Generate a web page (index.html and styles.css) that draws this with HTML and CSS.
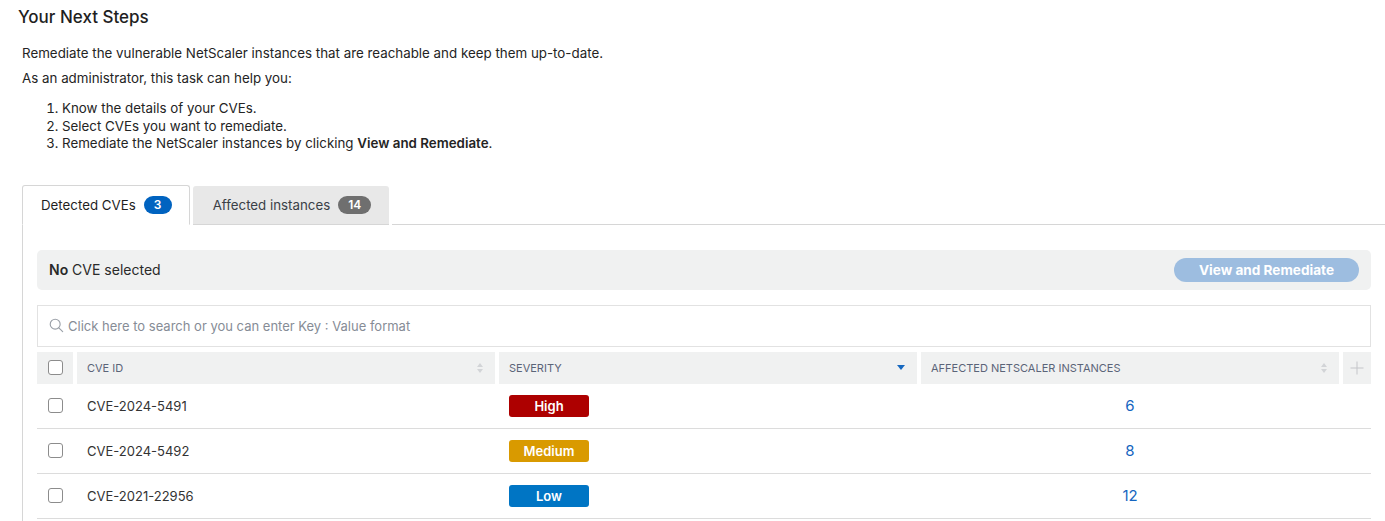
FILE: index.html
```html
<!DOCTYPE html>
<html lang="en">
<head>
<meta charset="utf-8">
<title>Your Next Steps</title>
<link rel="stylesheet" href="styles.css">
</head>
<body>
<div class="page">
  <h1 class="title">Your Next Steps</h1>
  <div class="intro">
    <p class="lead">Remediate the vulnerable NetScaler instances that are reachable and keep them up-to-date.</p>
    <p class="lead second">As an administrator, this task can help you:</p>
    <ol class="steps">
      <li>Know the details of your CVEs.</li>
      <li>Select CVEs you want to remediate.</li>
      <li>Remediate the NetScaler instances by clicking <b>View and Remediate</b>.</li>
    </ol>
  </div>

  <div class="tabs">
    <div class="tab active">Detected CVEs <span class="count blue">3</span></div>
    <div class="tab">Affected instances <span class="count gray">14</span></div>
    <div class="tab-rest"></div>
  </div>

  <div class="panel">
    <div class="selbar">
      <span><b>No</b> CVE selected</span>
      <button class="btn" type="button">View and Remediate</button>
    </div>

    <div class="search">
      <svg class="search-icon" viewBox="0 0 16 16" width="15" height="15" aria-hidden="true">
        <circle cx="6.6" cy="6.6" r="5.3" fill="none" stroke="#9aa0a8" stroke-width="1.2"/>
        <line x1="10.5" y1="10.5" x2="14.6" y2="14.6" stroke="#9aa0a8" stroke-width="1.2" stroke-linecap="round"/>
      </svg>
      <span class="placeholder">Click here to search or you can enter Key : Value format</span>
    </div>

    <div class="grid head">
      <div class="hcell check"><span class="cb"></span></div>
      <div class="hcell">CVE ID<span class="sort"><i class="up"></i><i class="down"></i></span></div>
      <div class="hcell">SEVERITY<span class="sorted"></span></div>
      <div class="hcell">AFFECTED NETSCALER INSTANCES<span class="sort"><i class="up"></i><i class="down"></i></span></div>
      <div class="hcell plus"><span class="plus-h"></span><span class="plus-v"></span></div>
    </div>

    <div class="grid row">
      <div class="cell check"><span class="cb"></span></div>
      <div class="cell">CVE-2024-5491</div>
      <div class="cell"><span class="badge high">High</span></div>
      <div class="cell num">6</div>
      <div class="cell"></div>
    </div>
    <div class="grid row">
      <div class="cell check"><span class="cb"></span></div>
      <div class="cell">CVE-2024-5492</div>
      <div class="cell"><span class="badge medium">Medium</span></div>
      <div class="cell num">8</div>
      <div class="cell"></div>
    </div>
    <div class="grid row">
      <div class="cell check"><span class="cb"></span></div>
      <div class="cell">CVE-2021-22956</div>
      <div class="cell"><span class="badge low">Low</span></div>
      <div class="cell num">12</div>
      <div class="cell"></div>
    </div>
  </div>
</div>
</body>
</html>
```

FILE: styles.css
```css
* { box-sizing: border-box; }

html, body {
  margin: 0;
  padding: 0;
  background: #ffffff;
}

body {
  font-family: Inter, "Noto Sans", "Liberation Sans", sans-serif;
  color: #222;
  font-size: 13px;
}

.page {
  padding: 6px 0 0 18px;
}

.title {
  margin: 0;
  font-size: 17px;
  line-height: 22px;
  font-weight: 500;
  color: #1f1f1f;
}

.intro {
  padding-left: 4px;
  margin-top: 16px;
}

.lead {
  margin: 0;
  font-size: 13.35px;
  line-height: 18px;
  color: #242424;
}

.lead.second {
  margin-top: 7px;
}

.steps {
  margin: 13px 0 0 0;
  padding-left: 40px;
  font-size: 13.35px;
  line-height: 17.5px;
  color: #242424;
}

.steps b { font-weight: 600; }

.tabs {
  display: flex;
  align-items: flex-end;
  margin-top: 32px;
  margin-left: 4px;
  height: 40px;
}

.tab {
  display: flex;
  align-items: center;
  gap: 8px;
  height: 39px;
  padding: 0 18px 0 20px;
  font-size: 13.3px;
  color: #3a3f47;
  background: #e8e8e8;
  border-bottom: 1px solid #d6d6d6;
  border-radius: 3px 3px 0 0;
  margin-right: 3px;
}

.tab.active {
  height: 40px;
  background: #fff;
  color: #1f1f1f;
  border: 1px solid #d6d6d6;
  border-bottom: 1px solid #fff;
  padding: 0 17px 0 18px;
}

.tab-rest {
  flex: 1;
  border-bottom: 1px solid #d6d6d6;
  height: 1px;
}

.count {
  display: inline-flex;
  align-items: center;
  justify-content: center;
  height: 18px;
  min-width: 28px;
  padding: 0 8px;
  border-radius: 9px;
  font-size: 12px;
  font-weight: 600;
  color: #fff;
}

.count.blue { background: #0063c0; }
.count.gray { background: #6f6f6f; min-width: 33px; }

.panel {
  margin-left: 4px;
  border-left: 1px solid #d6d6d6;
  padding: 25px 14px 2px 14px;
}

.selbar {
  display: flex;
  align-items: center;
  justify-content: space-between;
  height: 40px;
  background: #f0f1f1;
  border-radius: 5px;
  padding: 0 12px 0 12px;
  font-size: 14px;
  color: #2a2a2a;
}

.selbar b { font-weight: 600; }

.btn {
  height: 24px;
  width: 185px;
  border: none;
  border-radius: 12px;
  background: #9dbde0;
  color: #fff;
  font-family: inherit;
  font-size: 13.6px;
  font-weight: 700;
  padding: 0;
}

.search {
  display: flex;
  align-items: center;
  gap: 4px;
  margin-top: 15px;
  height: 42px;
  border: 1px solid #e2e2e2;
  padding: 0 11px;
}

.search-icon { flex: none; }

.placeholder {
  color: #868c96;
  font-size: 13px;
}

.grid {
  display: grid;
  grid-template-columns: 36px 1fr 1fr 1fr 28px;
  column-gap: 4px;
}

.head {
  margin-top: 5px;
  height: 32px;
}

.hcell {
  position: relative;
  display: flex;
  align-items: center;
  background: #f0f1f1;
  padding: 0 10px;
  font-size: 11px;
  color: #5b6478;
}

.hcell.check, .cell.check {
  justify-content: center;
  padding: 0;
}

.cb {
  display: block;
  width: 15px;
  height: 15px;
  border: 1.5px solid #8c8c8c;
  border-radius: 3px;
  background: #fff;
}

.sort {
  margin-left: auto;
  display: flex;
  flex-direction: column;
  gap: 2px;
  margin-right: 2px;
}

.sort i {
  display: block;
  width: 0;
  height: 0;
  border-left: 3.5px solid transparent;
  border-right: 3.5px solid transparent;
}

.sort .up { border-bottom: 4px solid #d2d4d7; }
.sort .down { border-top: 4px solid #d2d4d7; }

.sorted {
  margin-left: auto;
  margin-right: 2px;
  width: 0;
  height: 0;
  border-left: 4.5px solid transparent;
  border-right: 4.5px solid transparent;
  border-top: 5px solid #1668c0;
}

.hcell.plus {
  justify-content: center;
  padding: 0;
}

.plus-h, .plus-v {
  position: absolute;
  background: #c4c6c9;
  left: 50%;
  top: 50%;
}

.plus-h { width: 13px; height: 1px; transform: translate(-50%, -50%); }
.plus-v { width: 1px; height: 13px; transform: translate(-50%, -50%); }

.row {
  height: 45px;
  border-bottom: 1px solid #dcdcdc;
}

.cell {
  display: flex;
  align-items: center;
  padding: 0 10px;
  font-size: 13px;
  color: #333;
}

.cell.num {
  justify-content: center;
  color: #1565c0;
  font-size: 15px;
}

.badge {
  display: inline-flex;
  align-items: center;
  justify-content: center;
  width: 80px;
  height: 22px;
  border-radius: 3px;
  color: #fff;
  font-size: 13px;
  font-weight: 600;
}

.badge.high { background: #ad0000; }
.badge.medium { background: #d99a00; }
.badge.low { background: #0075c4; }
```
